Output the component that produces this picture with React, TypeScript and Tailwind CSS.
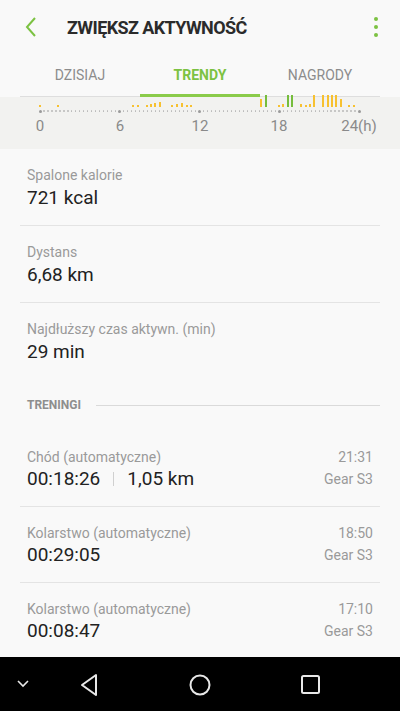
import React from "react";

const bars: { x: number; h: number; c: "y" | "g" }[] = [
  { x: 40, h: 2, c: "y" },
  { x: 58, h: 2, c: "y" },
  { x: 133, h: 2, c: "y" },
  { x: 138, h: 2, c: "y" },
  { x: 147, h: 2, c: "y" },
  { x: 151, h: 3, c: "y" },
  { x: 155, h: 4, c: "y" },
  { x: 160, h: 5, c: "y" },
  { x: 172, h: 2, c: "y" },
  { x: 177, h: 3, c: "y" },
  { x: 182, h: 4, c: "y" },
  { x: 187, h: 2, c: "y" },
  { x: 191, h: 2, c: "y" },
  { x: 261, h: 8, c: "y" },
  { x: 266, h: 12, c: "g" },
  { x: 279, h: 2, c: "y" },
  { x: 283, h: 3, c: "y" },
  { x: 288, h: 12, c: "g" },
  { x: 292, h: 12, c: "g" },
  { x: 301, h: 3, c: "y" },
  { x: 306, h: 2, c: "y" },
  { x: 310, h: 3, c: "y" },
  { x: 314, h: 12, c: "y" },
  { x: 323, h: 12, c: "y" },
  { x: 328, h: 12, c: "y" },
  { x: 332, h: 12, c: "y" },
  { x: 336, h: 12, c: "y" },
  { x: 341, h: 8, c: "y" },
  { x: 349, h: 2, c: "y" },
  { x: 354, h: 2, c: "y" },
];

const dots = Array.from({ length: 81 }, (_, i) => 40 + i * (319 / 80));

function Stat({ label, value }: { label: string; value: string }) {
  return (
    <div className="px-[7px]">
      <div className="text-[14px] leading-[18px] text-[#9a9a9a]">{label}</div>
      <div className="text-[19px] leading-[24px] text-[#222] mt-[2px]">{value}</div>
    </div>
  );
}

function Workout({ name, value, time }: { name: string; value: React.ReactNode; time: string }) {
  return (
    <div className="flex justify-between px-[7px]">
      <div>
        <div className="text-[14px] leading-[18px] text-[#9a9a9a]">{name}</div>
        <div className="text-[19px] leading-[24px] text-[#222] mt-[1px] flex items-center">{value}</div>
      </div>
      <div className="text-right">
        <div className="text-[14px] leading-[18px] text-[#9a9a9a]">{time}</div>
        <div className="text-[14px] leading-[18px] text-[#9a9a9a] mt-[4px]">Gear S3</div>
      </div>
    </div>
  );
}

function Divider() {
  return <div className="h-[1px] bg-[#e4e4e4] mt-[15px] mb-[17px]" />;
}

export default function App() {
  return (
    <div
      className="w-[400px] h-[711px] bg-[#f9f9f9] flex flex-col overflow-hidden"
      style={{ fontFamily: "Roboto, 'Noto Sans', sans-serif" }}
    >
      {/* Header */}
      <div className="h-[54px] flex items-center shrink-0 relative">
        <svg width="14" height="22" viewBox="0 0 14 22" className="ml-[24px]">
          <path d="M11 2 L3 11 L11 20" fill="none" stroke="#7cc242" strokeWidth="2" />
        </svg>
        <div className="ml-[29px] text-[18px] font-bold text-[#2b2b2b] tracking-[-0.6px]">ZWIĘKSZ AKTYWNOŚĆ</div>
        <div className="ml-auto mr-[22px] flex flex-col gap-[4px]">
          <div className="w-[4px] h-[4px] rounded-full bg-[#7cc242]" />
          <div className="w-[4px] h-[4px] rounded-full bg-[#7cc242]" />
          <div className="w-[4px] h-[4px] rounded-full bg-[#7cc242]" />
        </div>
      </div>

      {/* Tabs */}
      <div className="relative h-[43px] shrink-0 px-[20px]">
        <div className="flex h-[40px] items-center pt-[2px]">
          <div className="w-[120px] text-center text-[14px] text-[#8c8c8c]">DZISIAJ</div>
          <div className="w-[120px] text-center text-[14px] text-[#7cc242] font-bold">TRENDY</div>
          <div className="w-[120px] text-center text-[14px] text-[#8c8c8c]">NAGRODY</div>
        </div>
        <div className="absolute left-[20px] right-[20px] bottom-[0px] h-[1px] bg-[#dedede]" />
        <div className="absolute left-[140px] w-[120px] bottom-[0px] h-[3px] bg-[#8acb4a]" />
      </div>

      {/* Chart */}
      <div
        className="relative h-[52px] shrink-0 bg-[#f2f2f0]"
        style={{
          backgroundImage: "radial-gradient(#e6e6e3 0.6px, transparent 0.7px)",
          backgroundSize: "4px 4px",
        }}
      >
        {bars.map((b, i) => (
          <div
            key={i}
            className={"absolute w-[2px] " + (b.c === "g" ? "bg-[#76bd3c]" : "bg-[#f7c130]")}
            style={{ left: b.x - 1, top: 10 - b.h, height: b.h }}
          />
        ))}
        {dots.map((x, i) => {
          const major = i % 20 === 0;
          return (
            <div
              key={i}
              className={"absolute rounded-full " + (major ? "bg-[#9a9a9a]" : "bg-[#b8b8b8]")}
              style={{
                left: x - (major ? 1.5 : 0.6),
                top: 14 - (major ? 1.5 : 0.6),
                width: major ? 3 : 1.2,
                height: major ? 3 : 1.2,
              }}
            />
          );
        })}
        {[
          { x: 40, t: "0" },
          { x: 120, t: "6" },
          { x: 200, t: "12" },
          { x: 279, t: "18" },
          { x: 359, t: "24(h)" },
        ].map((l) => (
          <div
            key={l.t}
            className="absolute text-[15px] leading-[16px] text-[#8a8a8a] whitespace-nowrap"
            style={{ left: l.x, top: 21, transform: "translateX(-50%)" }}
          >
            {l.t}
          </div>
        ))}
      </div>

      {/* Content */}
      <div className="flex-1 px-[20px] pt-[17px]">
        <Stat label="Spalone kalorie" value="721 kcal" />
        <Divider />
        <Stat label="Dystans" value="6,68 km" />
        <Divider />
        <Stat label="Najdłuższy czas aktywn. (min)" value="29 min" />

        <div className="flex items-center mt-[33px] px-[7px]">
          <div className="text-[12px] leading-[16px] font-bold text-[#8e8e8e]">TRENINGI</div>
          <div className="flex-1 h-[1px] bg-[#dadada] ml-[15px] mr-[-7px]" />
        </div>

        <div className="mt-[35px]">
          <Workout
            name="Chód (automatyczne)"
            time="21:31"
            value={
              <>
                00:18:26
                <span className="inline-block w-[1px] h-[14px] bg-[#d0d0d0] mx-[13px]" />
                1,05 km
              </>
            }
          />
        </div>
        <Divider />
        <Workout name="Kolarstwo (automatyczne)" time="18:50" value="00:29:05" />
        <Divider />
        <Workout name="Kolarstwo (automatyczne)" time="17:10" value="00:08:47" />
      </div>

      {/* Nav bar */}
      <div className="h-[54px] shrink-0 bg-black flex items-center relative">
        <svg width="14" height="10" viewBox="0 0 14 10" className="absolute left-[16px] top-[22px]">
          <path d="M2 2 L7 7 L12 2" fill="none" stroke="#e8e8e8" strokeWidth="1.6" />
        </svg>
        <svg width="22" height="24" viewBox="0 0 22 24" className="absolute left-[79px] top-[16px]">
          <path d="M17 2 L17 22 L3 12 Z" fill="none" stroke="#e8e8e8" strokeWidth="2" strokeLinejoin="round" />
        </svg>
        <svg width="24" height="24" viewBox="0 0 24 24" className="absolute left-[188px] top-[16px]">
          <circle cx="12" cy="12" r="9.5" fill="none" stroke="#e8e8e8" strokeWidth="2" />
        </svg>
        <svg width="22" height="22" viewBox="0 0 22 22" className="absolute left-[300px] top-[17px]">
          <rect x="2" y="2" width="17" height="17" rx="1.5" fill="none" stroke="#e8e8e8" strokeWidth="2" />
        </svg>
      </div>
    </div>
  );
}
